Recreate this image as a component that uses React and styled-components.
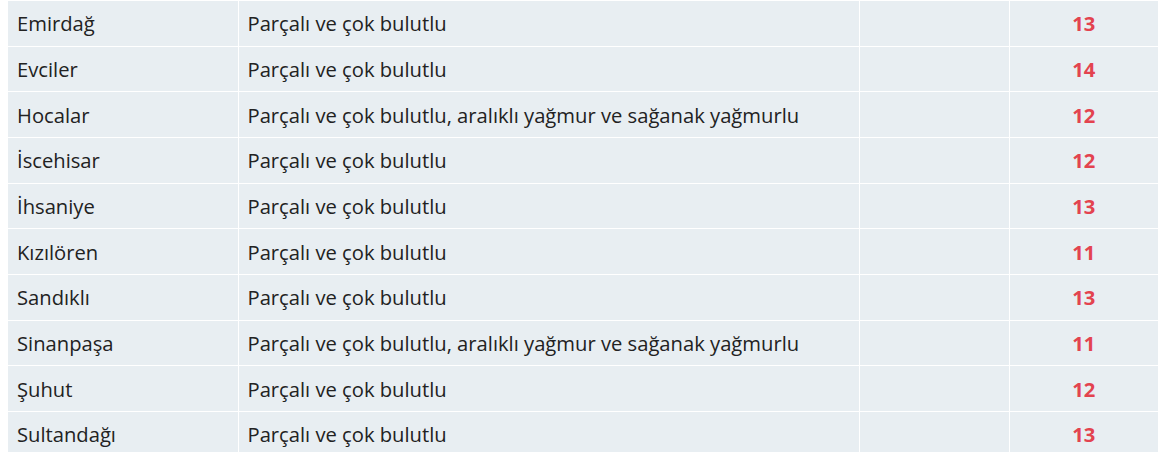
import React from "react";
import styled, { createGlobalStyle } from "styled-components";

const GlobalStyle = createGlobalStyle`
  html, body {
    margin: 0;
    padding: 0;
    background: #ffffff;
    overflow: hidden;
  }
  body {
    padding-left: 8px;
    font-family: "Open Sans", "DejaVu Sans", sans-serif;
  }
`;

const Table = styled.table`
  width: 1150px;
  border-collapse: collapse;
  table-layout: fixed;
  font-size: 20.2px;
  color: #222222;
`;

const Col = styled.col`
  width: ${(props) => props.$w}px;
`;

const Row = styled.tr`
  background: #e8eef2;
`;

const Cell = styled.td`
  height: 45.67px;
  box-sizing: border-box;
  padding: 0 9px;
  line-height: 26px;
  border-top: 1px solid #ffffff;
  border-left: ${(props) => (props.$first ? "none" : "1px solid #ffffff")};
  text-align: ${(props) => (props.$center ? "center" : "left")};
  vertical-align: middle;
  white-space: nowrap;
`;

const Temp = styled.span`
  color: #e3434f;
  font-weight: 700;
`;

const rows = [
  ["Emirdağ", "Parçalı ve çok bulutlu", 13],
  ["Evciler", "Parçalı ve çok bulutlu", 14],
  ["Hocalar", "Parçalı ve çok bulutlu, aralıklı yağmur ve sağanak yağmurlu", 12],
  ["İscehisar", "Parçalı ve çok bulutlu", 12],
  ["İhsaniye", "Parçalı ve çok bulutlu", 13],
  ["Kızılören", "Parçalı ve çok bulutlu", 11],
  ["Sandıklı", "Parçalı ve çok bulutlu", 13],
  ["Sinanpaşa", "Parçalı ve çok bulutlu, aralıklı yağmur ve sağanak yağmurlu", 11],
  ["Şuhut", "Parçalı ve çok bulutlu", 12],
  ["Sultandağı", "Parçalı ve çok bulutlu", 13],
];

export default function App() {
  return (
    <>
      <GlobalStyle />
      <Table>
        <colgroup>
          <Col $w={230} />
          <Col $w={621} />
          <Col $w={150} />
          <Col $w={149} />
        </colgroup>
        <tbody>
          {rows.map(([name, desc, temp]) => (
            <Row key={name}>
              <Cell $first>{name}</Cell>
              <Cell>{desc}</Cell>
              <Cell />
              <Cell $center>
                <Temp>{temp}</Temp>
              </Cell>
            </Row>
          ))}
        </tbody>
      </Table>
    </>
  );
}
